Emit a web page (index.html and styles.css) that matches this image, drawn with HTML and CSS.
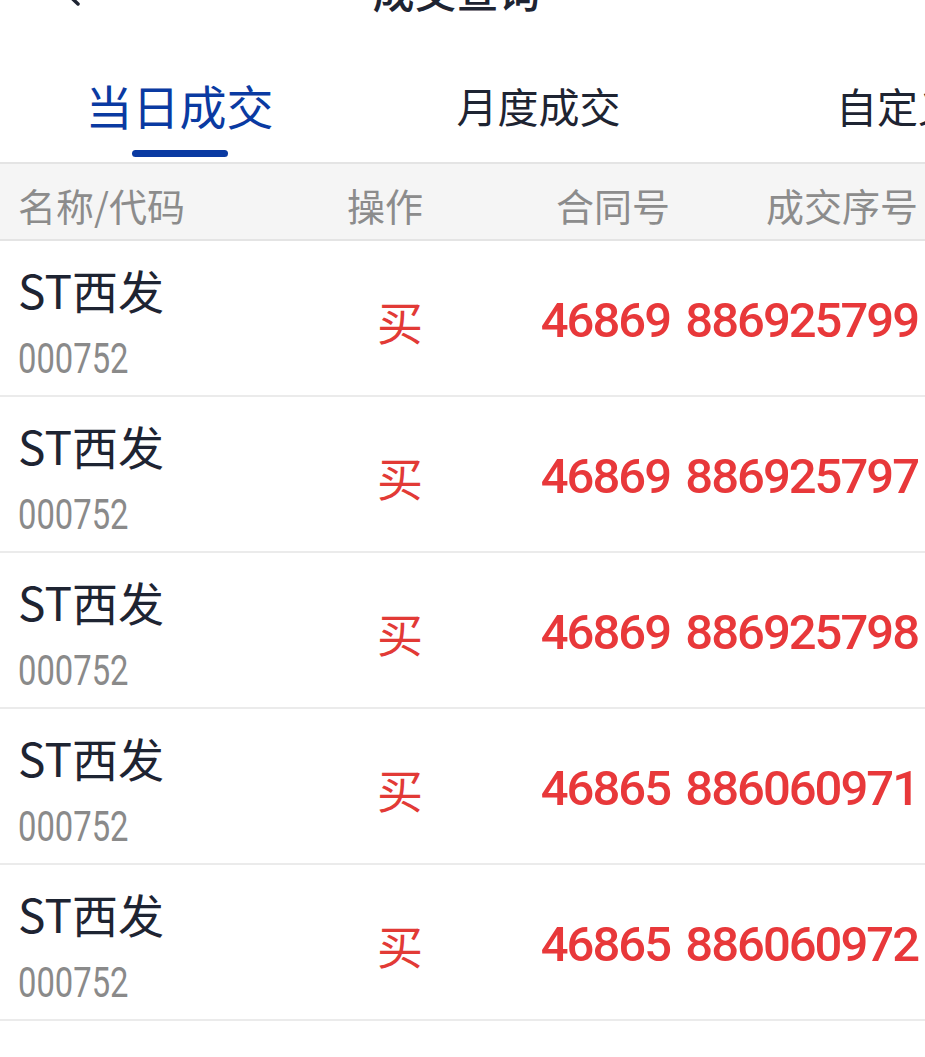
FILE: index.html
```html
<!DOCTYPE html>
<html lang="zh-CN">
<head>
<meta charset="utf-8">
<title>成交查询</title>
<link rel="stylesheet" href="styles.css">
</head>
<body>
<div class="page">
  <header class="navbar">
    <span class="back">
      <svg width="30" height="44" viewBox="0 0 30 44"><polyline points="26,2 5,22 26,42" fill="none" stroke="#1e2432" stroke-width="3.5" stroke-linecap="round" stroke-linejoin="round"/></svg>
    </span>
    <h1 class="title">成交查询</h1>
  </header>

  <nav class="tabs">
    <div class="tab active"><span class="tab-label">当日成交</span><span class="tab-bar"></span></div>
    <div class="tab"><span class="tab-label">月度成交</span><span class="tab-bar"></span></div>
    <div class="tab"><span class="tab-label">自定义</span><span class="tab-bar"></span></div>
  </nav>

  <div class="table">
    <div class="row head">
      <div class="c1">名称/代码</div>
      <div class="c2">操作</div>
      <div class="c3">合同号</div>
      <div class="c4">成交序号</div>
    </div>

    <div class="row">
      <div class="c1 namecell"><span class="name">ST西发</span><span class="code">000752</span></div>
      <div class="c2 op">买</div>
      <div class="c3 num">46869</div>
      <div class="c4 num">886925799</div>
    </div>
    <div class="row">
      <div class="c1 namecell"><span class="name">ST西发</span><span class="code">000752</span></div>
      <div class="c2 op">买</div>
      <div class="c3 num">46869</div>
      <div class="c4 num">886925797</div>
    </div>
    <div class="row">
      <div class="c1 namecell"><span class="name">ST西发</span><span class="code">000752</span></div>
      <div class="c2 op">买</div>
      <div class="c3 num">46869</div>
      <div class="c4 num">886925798</div>
    </div>
    <div class="row">
      <div class="c1 namecell"><span class="name">ST西发</span><span class="code">000752</span></div>
      <div class="c2 op">买</div>
      <div class="c3 num">46865</div>
      <div class="c4 num">886060971</div>
    </div>
    <div class="row">
      <div class="c1 namecell"><span class="name">ST西发</span><span class="code">000752</span></div>
      <div class="c2 op">买</div>
      <div class="c3 num">46865</div>
      <div class="c4 num">886060972</div>
    </div>
  </div>
</div>
</body>
</html>
```

FILE: styles.css
```css
* { box-sizing: border-box; }
html, body { margin: 0; padding: 0; background: #ffffff; }
body {
  font-family: "Noto Sans CJK SC", "Noto Sans", sans-serif;
  color: #1e2432;
  overflow: hidden;
}
.page { width: 925px; overflow: hidden; }

.navbar {
  margin-top: -60px;
  height: 100px;
  display: flex;
  align-items: center;
  padding-left: 52px;
  padding-right: 12px;
}
.back { display: flex; width: 30px; flex-shrink: 0; margin-top: -12px; }
.title {
  flex: 1;
  margin: 0;
  text-align: center;
  font-size: 42px;
  line-height: 1;
  font-weight: 500;
  color: #1e2432;
  padding-right: 82px;
}

.tabs {
  display: flex;
  height: 122px;
  padding-top: 37px;
  overflow: hidden;
}
.tab {
  flex: 0 0 359px;
  display: flex;
  flex-direction: column;
  align-items: center;
}
.tab-label {
  height: 56px;
  line-height: 56px;
  font-size: 41px;
  color: #1e2432;
  white-space: nowrap;
}
.tab-bar {
  margin-top: 17px;
  width: 96px;
  height: 7px;
  border-radius: 4px;
  background: transparent;
}
.tab.active .tab-label { font-size: 47px; color: #0a3aa2; }
.tab.active .tab-bar { background: #0a3aa2; }

.table { width: 925px; }
.row {
  display: grid;
  grid-template-columns: 240px 165px 247px 248px;
  padding: 0 7px 0 18px;
  align-items: center;
  height: 156px;
  border-bottom: 2px solid #ebebeb;
}
.row.head {
  height: 79px;
  background: #f5f5f5;
  border-top: 2px solid #e4e4e4;
  border-bottom: 2px solid #e4e4e4;
  font-size: 38px;
  color: #8c8c8c;
  padding-top: 6px;
}
.c2, .c3, .c4 { text-align: right; white-space: nowrap; }
.c1 { white-space: nowrap; }

.namecell {
  align-self: start;
  padding-top: 25px;
  display: flex;
  flex-direction: column;
  align-items: flex-start;
}
.name {
  font-size: 46px;
  line-height: 46px;
  color: #1e2432;
}
.code {
  margin-top: 26px;
  font-family: "Roboto", sans-serif;
  font-size: 42px;
  line-height: 42px;
  color: #8a8a8a;
  transform: scaleX(0.78);
  transform-origin: left center;
}
.op {
  font-size: 46px;
  line-height: 46px;
  color: #e23a36;
  padding-top: 4px;
}
.num {
  font-family: "Roboto", "Liberation Sans", sans-serif;
  font-weight: 500;
  font-size: 49px;
  line-height: 49px;
  letter-spacing: -2px;
  color: #e8383a;
  padding-top: 4px;
}
```
